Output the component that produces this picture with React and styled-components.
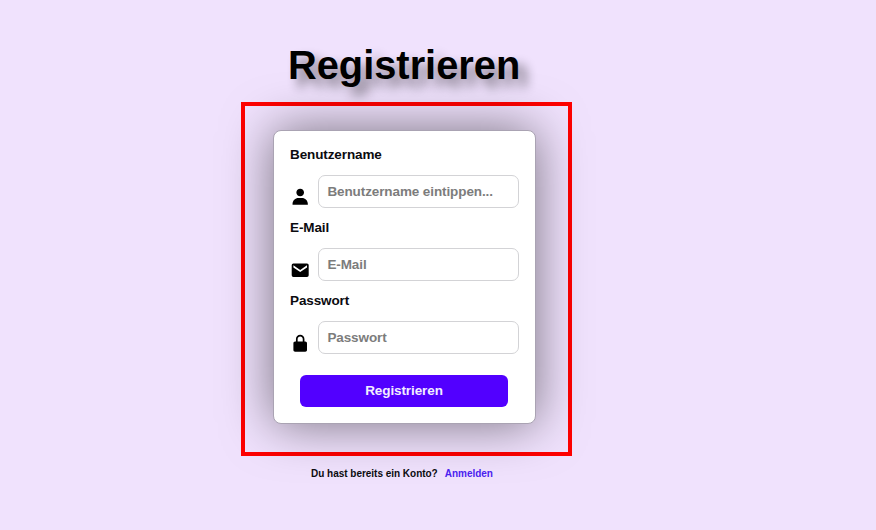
import React from "react";
import styled, { createGlobalStyle } from "styled-components";
import { BiSolidUser, BiSolidEnvelope, BiSolidLockAlt } from "react-icons/bi";

const GlobalStyle = createGlobalStyle`
  *, *::before, *::after { box-sizing: border-box; }
  body {
    margin: 0;
    background: #f0e2fd;
    font-family: "Liberation Sans", Arial, sans-serif;
    font-weight: 700;
    color: #0b0b0f;
  }
`;

const Page = styled.main`
  display: flex;
  flex-direction: column;
  align-items: flex-start;
  height: 530px;
  padding: 42px 0 0 241px;
  overflow: hidden;
`;

const Title = styled.h1`
  margin: 0 0 14px 47px;
  font-size: 39.8px;
  line-height: 46px;
  color: #000;
  text-shadow: 8px 8px 11px rgba(0, 0, 0, 0.48);
`;

const Highlight = styled.section`
  width: 331px;
  height: 354px;
  padding: 24px 0 0 28px;
  border: 4px solid #ff0000;
`;

const Card = styled.form`
  display: flex;
  flex-direction: column;
  width: 262.5px;
  height: 294px;
  padding: 16px 16px 0;
  border: 1px solid #aaa3b3;
  border-radius: 8px;
  background: #fff;
  box-shadow: 0 0 50px rgba(0, 0, 0, 0.5);
`;

const Field = styled.div`
  height: 73.2px;
`;

const Label = styled.label`
  display: block;
  height: 28px;
  font-size: 13.5px;
  letter-spacing: -0.11px;
  line-height: 15px;
`;

const InputRow = styled.div`
  display: flex;
  gap: 8px;
`;

const IconSlot = styled.span`
  display: flex;
  flex: none;
  width: 20.4px;
  padding-top: 12px;
  color: #000;
`;

const Input = styled.input`
  width: 200.6px;
  height: 33px;
  padding: 0 8px 1px;
  border: 1px solid #d3d3d6;
  border-radius: 7px;
  outline: none;
  background: #fff;
  font: 700 13.5px "Liberation Sans", Arial, sans-serif;
  letter-spacing: -0.1px;

  &::placeholder {
    color: #7c7c7c;
    opacity: 1;
  }
`;

const SubmitButton = styled.button`
  width: 208px;
  height: 32px;
  margin: 8px 0 0 10px;
  padding: 0 0 1px;
  border: 0;
  border-radius: 6px;
  background: #5200ff;
  color: #f1edff;
  font: 700 13.5px "Liberation Sans", Arial, sans-serif;
  letter-spacing: -0.1px;
`;

const Footer = styled.p`
  display: flex;
  gap: 7px;
  margin: 11px 0 0 70px;
  font-size: 10px;
  letter-spacing: -0.02px;
  line-height: 13px;
`;

const Link = styled.a`
  color: #4a22ef;
  text-decoration: none;
`;

const fields = [
  { id: "username", label: "Benutzername", placeholder: "Benutzername eintippen...", type: "text", Icon: BiSolidUser },
  { id: "email", label: "E-Mail", placeholder: "E-Mail", type: "email", Icon: BiSolidEnvelope },
  { id: "password", label: "Passwort", placeholder: "Passwort", type: "password", Icon: BiSolidLockAlt },
];

export default function App() {
  return (
    <>
      <GlobalStyle />
      <Page>
        <Title>Registrieren</Title>
        <Highlight>
          <Card>
            {fields.map(({ id, label, placeholder, type, Icon }) => (
              <Field key={id}>
                <Label htmlFor={id}>{label}</Label>
                <InputRow>
                  <IconSlot>
                    <Icon size={20.4} />
                  </IconSlot>
                  <Input id={id} type={type} placeholder={placeholder} />
                </InputRow>
              </Field>
            ))}
            <SubmitButton type="button">Registrieren</SubmitButton>
          </Card>
        </Highlight>
        <Footer>
          <span>Du hast bereits ein Konto?</span>
          <Link href="#anmelden">Anmelden</Link>
        </Footer>
      </Page>
    </>
  );
}
